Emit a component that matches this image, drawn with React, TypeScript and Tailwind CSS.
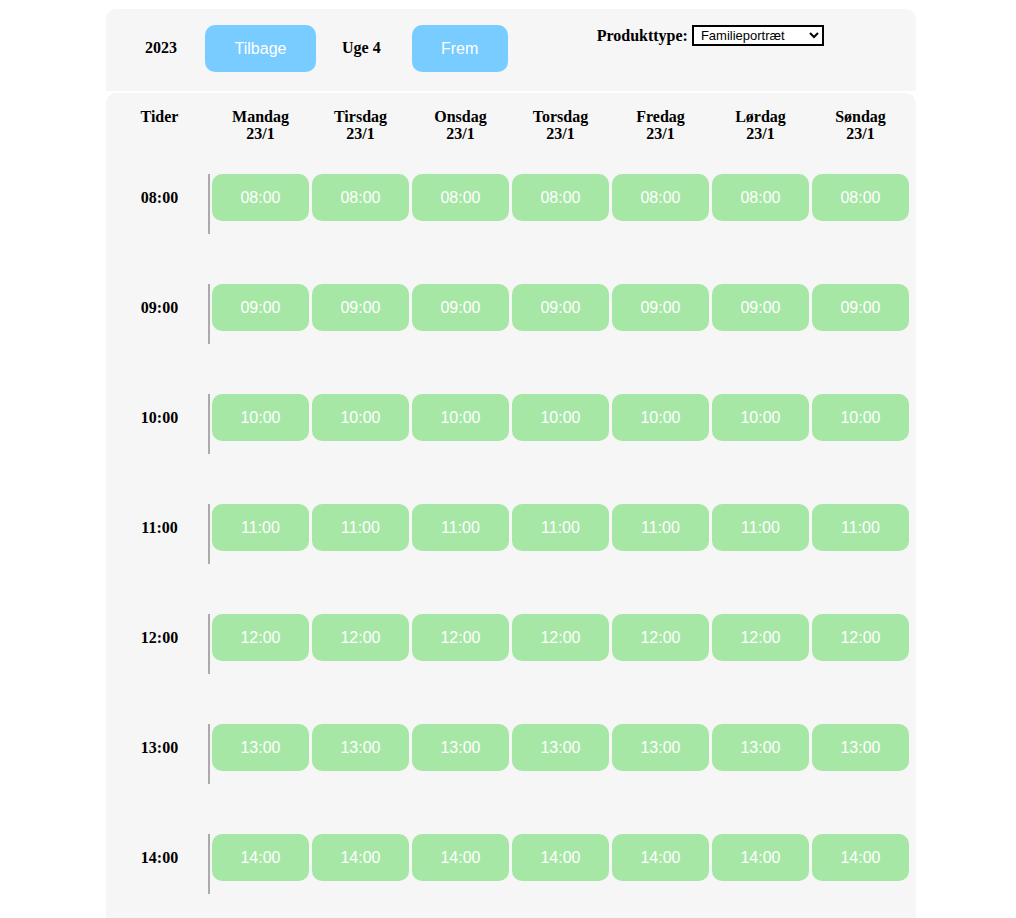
import React from "react";

const days = ["Mandag", "Tirsdag", "Onsdag", "Torsdag", "Fredag", "Lørdag", "Søndag"];
const times = ["08:00", "09:00", "10:00", "11:00", "12:00", "13:00", "14:00"];

const serif = "font-['Liberation_Serif',serif] font-bold text-[16px] text-black";
const sans = "font-['Liberation_Sans',Arial,sans-serif]";

const TopBar: React.FC = () => (
  <div className="flex items-start h-[82px] rounded-t-[10px] bg-[#f6f6f6] pt-[16px]">
    <span className={`${serif} ml-[39px] mt-[14px] leading-[18px]`}>2023</span>
    <button
      className={`${sans} ml-[28px] w-[111px] h-[47px] rounded-[10px] bg-[#78ccff] text-white text-[16px]`}
    >
      Tilbage
    </button>
    <span className={`${serif} ml-[26px] mt-[14px] leading-[18px]`}>Uge 4</span>
    <button
      className={`${sans} ml-[31px] w-[96px] h-[47px] rounded-[10px] bg-[#78ccff] text-white text-[16px]`}
    >
      Frem
    </button>
    <div className="ml-[89px] flex items-center h-[21px]">
      <label className={`${serif} leading-[18px] mr-[4px]`}>Produkttype:</label>
      <select
        defaultValue="Familieportræt"
        className={`${sans} w-[132px] h-[21px] border-2 border-black bg-white text-[13px] text-black pl-[3px]`}
      >
        <option>Familieportræt</option>
        <option>Portræt</option>
        <option>Bryllup</option>
      </select>
    </div>
  </div>
);

const Schedule: React.FC = () => (
  <div className="mt-[2px] rounded-t-[10px] bg-[#f6f6f6] pt-[15px] pl-[5px] pb-[40px]">
    <div className="flex items-start">
      <div className={`${serif} w-[97px] text-center leading-[18px]`}>Tider</div>
      <div className="w-[4px]" />
      {days.map((d) => (
        <div key={d} className={`${serif} w-[97px] mr-[3px] text-center leading-[17px]`}>
          <div>{d}</div>
          <div>23/1</div>
        </div>
      ))}
    </div>

    <div className="mt-[32px] flex flex-col gap-[50px]">
      {times.map((t) => (
        <div key={t} className="flex items-start">
          <div className={`${serif} w-[97px] h-[47px] flex items-center justify-center`}>{t}</div>
          <div className="w-[2px] h-[60px] bg-[#aaaaaa]" />
          <div className="ml-[2px] flex gap-[3px]">
            {days.map((d) => (
              <button
                key={d}
                className={`${sans} w-[97px] h-[47px] rounded-[10px] bg-[#a6e7a6] text-white text-[16px]`}
              >
                {t}
              </button>
            ))}
          </div>
        </div>
      ))}
    </div>
  </div>
);

export default function App() {
  return (
    <div className="min-h-screen bg-white">
      <div className="ml-[106px] w-[810px] pt-[9px]">
        <TopBar />
        <Schedule />
      </div>
    </div>
  );
}
